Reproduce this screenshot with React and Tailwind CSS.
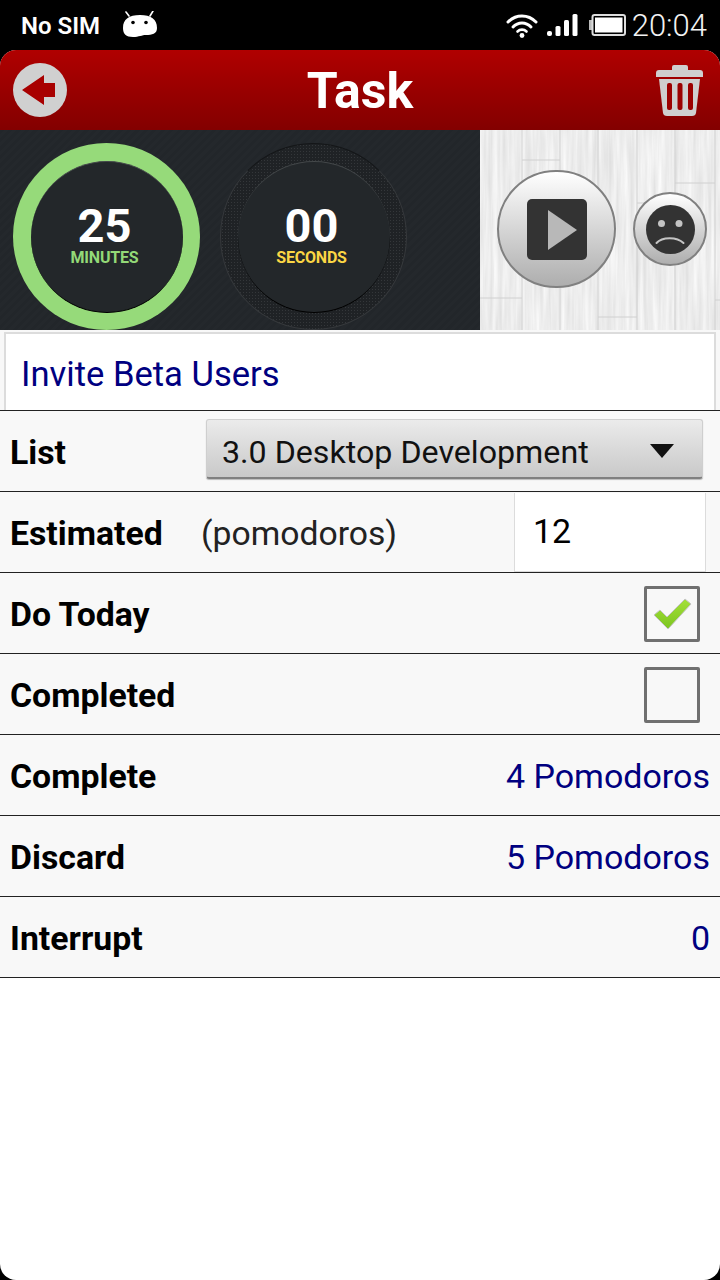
const rows = [
  { label: "Complete", value: "4 Pomodoros" },
  { label: "Discard", value: "5 Pomodoros" },
  { label: "Interrupt", value: "0" },
];

function StatusBar() {
  return (
    <div className="h-[50px] flex items-center justify-between bg-black text-white">
      <div className="flex items-center">
        <span className="ml-[21px] w-[102px] text-[24px] leading-none font-semibold font-['Roboto',sans-serif] pt-[2px]">No SIM</span>
        {/* android head */}
        <svg width="36" height="27" viewBox="0 0 36 27" className="-mt-[1px] -ml-[1px]">
          <path d="M7 5 L4 1 M28 5 L31 0" stroke="#fff" strokeWidth="1.6" strokeLinecap="round" />
          <path d="M1 17 C1 8 7 4 18 4 C29 4 35 8 35 17 C35 23 30 24 24 24 C20 24 17 26 11 26 C4 26 1 23 1 17 Z" fill="#fff" />
          <circle cx="11" cy="11.5" r="1.8" fill="#000" />
          <circle cx="24" cy="11.5" r="1.8" fill="#000" />
        </svg>
      </div>
      <div className="flex items-center">
        <svg width="32" height="26" viewBox="0 0 32 26" className="mr-[9px]">
          <path d="M2 10 C10 2 22 2 30 10" fill="none" stroke="#fff" strokeWidth="3" strokeLinecap="round" />
          <path d="M7 15 C12 9.5 20 9.5 25 15" fill="none" stroke="#fff" strokeWidth="3" strokeLinecap="round" />
          <path d="M11.5 19.5 C14 17 18 17 20.5 19.5" fill="none" stroke="#fff" strokeWidth="2.6" strokeLinecap="round" />
          <circle cx="16" cy="23.5" r="2.4" fill="#fff" />
        </svg>
        <svg width="31" height="24" viewBox="0 0 31 24" className="mr-[11px]">
          <rect x="0" y="18" width="5" height="5" rx="2" fill="#fff" />
          <rect x="8.5" y="13" width="5" height="10" rx="1.5" fill="#fff" />
          <rect x="17" y="7" width="5" height="16" rx="1.5" fill="#fff" />
          <rect x="25.5" y="1" width="5" height="22" rx="1.5" fill="#fff" />
        </svg>
        <svg width="37" height="22" viewBox="0 0 37 22" className="mr-[6px]">
          <rect x="0" y="6" width="3" height="10" fill="#bbb" />
          <rect x="3.5" y="1" width="32.5" height="20" rx="2" fill="none" stroke="#ddd" strokeWidth="2" />
          <rect x="6" y="3.5" width="27.5" height="15" fill="#fff" />
        </svg>
        <span className="mr-[13px] text-[31px] leading-none font-light font-['Roboto',sans-serif] text-[#f2f2f2]">20:04</span>
      </div>
    </div>
  );
}

function Header() {
  return (
    <div className="h-[80px] grid grid-cols-[1fr_auto_1fr] items-center bg-gradient-to-b from-[#b00000] to-[#830000]">
      <svg width="54" height="54" viewBox="0 0 54 54" className="ml-[13px]">
        <circle cx="27" cy="27" r="27" fill="#d0d0d0" />
        <path d="M9 27 L31 12 V20 H42 V34 H31 V42 Z" fill="#a80000" />
      </svg>
      <span className="text-[50px] leading-none font-bold text-white pt-[2px]">Task</span>
      <svg width="47" height="51" viewBox="0 0 47 51" className="justify-self-end mr-[17px]">
        <path d="M16 5 V2 Q16 0 18 0 H30 Q32 0 32 2 V5 H44 Q47 5 47 8 V12 H0 V8 Q0 5 3 5 Z" fill="#cfcfcf" />
        <path d="M3 14 H44 L40 48 Q39.5 51 36 51 H11 Q7.5 51 7 48 Z" fill="#cfcfcf" />
        <rect x="11" y="18" width="5" height="27" rx="2" fill="#9c0000" />
        <rect x="21.5" y="18" width="5" height="27" rx="2" fill="#9c0000" />
        <rect x="32" y="18" width="5" height="27" rx="2" fill="#9c0000" />
      </svg>
    </div>
  );
}

function Dial({ value, label, labelColor, ring }) {
  return (
    <div className={`w-[187px] h-[187px] rounded-full flex items-center justify-center ${ring}`}>
      <div className="w-[152px] h-[152px] rounded-full bg-[#23272a] border-b border-b-black border-t border-t-[#44484a] flex flex-col items-center pt-[40px] pr-[4px]">
        <span className="text-[47px] leading-[47px] font-bold text-white">{value}</span>
        <span className={`text-[16px] leading-[18px] font-bold tracking-[-0.2px] ${labelColor}`}>{label}</span>
      </div>
    </div>
  );
}

function TimerPanel() {
  return (
    <div className="h-[200px] flex">
      <div className="w-[480px] flex gap-[20px] pl-[13px] pt-[13px] bg-[#23272b] bg-[repeating-linear-gradient(135deg,#22262a_0px,#22262a_3px,#24282c_3px,#24282c_6px)]">
        <Dial value="25" label="MINUTES" labelColor="text-[#93d977]" ring="bg-[#96da7a]" />
        <Dial
          value="00"
          label="SECONDS"
          labelColor="text-[#fbd644]"
          ring="border border-[#36393c] border-t-[#141618] bg-[#1f2225] bg-[radial-gradient(#34373a_1px,transparent_1px)] bg-[length:3px_3px]"
        />
      </div>
      <div className="relative flex-1 flex items-start bg-[#ececec]">
        {/* wood planks */}
        <svg width="240" height="200" className="absolute inset-0">
          <filter id="grain" colorInterpolationFilters="sRGB" x="0" y="0" width="100%" height="100%">
            <feTurbulence type="fractalNoise" baseFrequency="0.22 0.012" numOctaves="3" seed="4" />
            <feColorMatrix values="0.14 0 0 0 0.86 0.14 0 0 0 0.86 0.14 0 0 0 0.86 0 0 0 0 1" />
          </filter>
          <rect width="240" height="200" filter="url(#grain)" />
          <g stroke="#d0d0d0" strokeWidth="1" fill="none">
            <path d="M42 0 V200 M80 0 V200 M118 0 V200 M157 0 V200 M195 0 V200 M235 0 V200" />
            <path d="M42 30 H80 M0 168 H42 M118 187 H157 M195 53 H235 M157 73 H170 M235 170 H240" />
          </g>
        </svg>
        <button className="relative mt-[40px] ml-[17px] w-[119px] h-[118px] rounded-full border-2 border-[#808080] bg-gradient-to-b from-white to-[#aeaeae] flex items-center justify-center">
          <svg width="60" height="61" viewBox="0 0 60 61">
            <rect width="60" height="61" rx="5" fill="#333" />
            <path d="M21 11 L50 31 L21 51 Z" fill="#b8b8b8" />
          </svg>
        </button>
        <button className="relative mt-[62px] ml-[17px] w-[74px] h-[74px] rounded-full border-2 border-[#808080] bg-gradient-to-b from-white to-[#aeaeae] flex items-center justify-center">
          <svg width="49" height="49" viewBox="0 0 49 49">
            <circle cx="24.5" cy="24.5" r="24.5" fill="#333" />
            <circle cx="15.5" cy="18.5" r="3.5" fill="#c4c4c4" />
            <circle cx="33" cy="18.5" r="3.5" fill="#c4c4c4" />
            <path d="M10.5 38 C16 31.5 31 31.5 37.5 38" fill="none" stroke="#c4c4c4" strokeWidth="2" strokeLinecap="round" />
          </svg>
        </button>
      </div>
    </div>
  );
}

function Row({ children }) {
  return <div className="h-[81px] flex items-center justify-between border-b border-[#222] bg-[#f8f8f8] pl-[10px]">{children}</div>;
}

function Label({ children }) {
  return <span className="text-[33.8px] leading-none font-bold text-black pt-[4px]">{children}</span>;
}

function Checkbox({ checked }) {
  return (
    <div className="mr-[20px] mt-[2px] w-[56px] h-[56px] border-[3px] border-[#707070] rounded-[2px] flex items-center justify-center">
      {checked && (
        <svg width="40" height="32" viewBox="0 0 40 32">
          <defs>
            <linearGradient id="tick" x1="0" y1="0" x2="0" y2="1">
              <stop offset="0" stopColor="#a4e03a" />
              <stop offset="1" stopColor="#7cc520" />
            </linearGradient>
          </defs>
          <path d="M2 17 L8 12 L15 19 L33 1 L39 6 L16 31 Z" fill="url(#tick)" stroke="#c4c4c4" strokeWidth="1" strokeLinejoin="round" />
        </svg>
      )}
    </div>
  );
}

export default function App() {
  return (
    <div className="w-[720px] h-[1280px] bg-black overflow-hidden font-['Roboto',sans-serif]">
      <StatusBar />
      <div className="h-[1230px] bg-white rounded-[16px] overflow-hidden">
        <Header />
        <TimerPanel />

        <div className="h-[81px] bg-[#f8f8f8] border-b border-[#222] pt-[2px] px-[4px]">
          <div className="h-full bg-white border-x-2 border-t-2 border-[#dcdcdc] pl-[15px] pt-[23px]">
            <span className="text-[34.6px] leading-none text-[#000080]">Invite Beta Users</span>
          </div>
        </div>

        <Row>
          <Label>List</Label>
          <div className="mr-[17px] self-start mt-[8px] w-[497px] h-[60px] rounded-[3px] border border-[#cfcfcf] border-b-2 border-b-[#808080] shadow-[0_1px_1px_rgba(0,0,0,0.25)] bg-gradient-to-b from-[#ebebeb] to-[#c9c9c9] flex items-center justify-between pl-[15px] pr-[28px]">
            <span className="text-[32.2px] leading-none text-[#111] pt-[7px]">3.0 Desktop Development</span>
            <svg width="24" height="14" viewBox="0 0 24 14" className="mt-[4px]"><path d="M0 0 H24 L12 14 Z" fill="#111" /></svg>
          </div>
        </Row>

        <Row>
          <div className="flex items-center">
            <span className="w-[191px] flex"><Label>Estimated</Label></span>
            <span className="text-[33.7px] leading-none text-[#222] pt-[4px]">(pomodoros)</span>
          </div>
          <div className="mr-[14px] self-end w-[192px] h-[79px] bg-white border-x border-b border-[#dcdcdc] pl-[18px] pt-[21px]">
            <span className="text-[34px] leading-none text-black">12</span>
          </div>
        </Row>

        <Row>
          <Label>Do Today</Label>
          <Checkbox checked />
        </Row>
        <Row>
          <Label>Completed</Label>
          <Checkbox />
        </Row>

        {rows.map((row) => (
          <Row key={row.label}>
            <Label>{row.label}</Label>
            <span className="mr-[10px] text-[34px] leading-none text-[#000080] pt-[2px]">{row.value}</span>
          </Row>
        ))}
      </div>
    </div>
  );
}
